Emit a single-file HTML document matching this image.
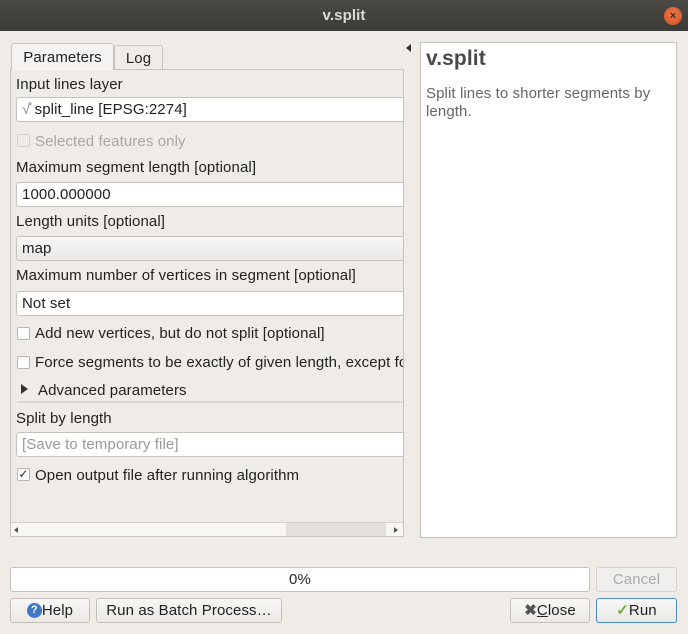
<!DOCTYPE html>
<html><head><style>
*{box-sizing:border-box;margin:0;padding:0}
body{width:688px;height:634px;background:#efebe7;font-family:"Liberation Sans",sans-serif;font-size:15px;letter-spacing:0.1px;color:#3c3c3c;position:relative;overflow:hidden}
.a{position:absolute}
.title{left:0;top:0;width:688px;height:31px;background:linear-gradient(#4a4945,#3c3b37);color:#dfdbd2;font-weight:bold;text-align:center;line-height:31px;font-size:15px}
.close{left:664px;top:7px;width:18px;height:18px;border-radius:50%;background:radial-gradient(circle at 50% 40%,#f07a4c,#d24e1f);color:#4a2a1a;font-size:11px;text-align:center;line-height:18px;font-weight:bold}
.field{background:#fff;border:1px solid #c6c2bd;border-radius:3px;height:25px;line-height:23px;padding-left:5px;color:#222;white-space:nowrap}
.lbl{color:#222;left:16px;white-space:nowrap}
.cb{width:13px;height:13px;border:1px solid #b8b4ae;background:#fff;border-radius:2px}
.btn{border:1px solid #c3bfba;border-radius:3px;background:linear-gradient(#f8f7f6,#ebe8e5);height:25px;line-height:23px;text-align:center;color:#222;white-space:nowrap}
</style></head><body>
<div class="a title">v.split</div>
<div class="a close">×</div>
<div class="a" style="left:11px;top:43px;width:103px;height:27px;border:1px solid #c6c2bd;border-bottom:none;border-radius:3px 3px 0 0;background:#f5f3f1;line-height:27px;text-align:center;color:#222;z-index:2">Parameters</div>
<div class="a" style="left:114px;top:45px;width:49px;height:24px;border:1px solid #c6c2bd;border-bottom:none;border-radius:3px 3px 0 0;line-height:25px;text-align:center;color:#222">Log</div>
<div class="a" style="left:10px;top:69px;width:394px;height:468px;border:1px solid #c6c2bd;background:#efebe7;overflow:hidden">
<div class="a lbl" style="top:6px;left:5px">Input lines layer</div>
<div class="a field" style="left:5px;top:27px;width:390px"><span style="color:#888">√̊</span> split_line [EPSG:2274]</div>
<div class="a cb" style="left:6px;top:64px;border-color:#d3cfca;background:#efebe7"></div>
<div class="a" style="left:24px;top:63px;color:#aaa6a1;white-space:nowrap">Selected features only</div>
<div class="a lbl" style="top:89px;left:5px">Maximum segment length [optional]</div>
<div class="a field" style="left:5px;top:112px;width:390px">1000.000000</div>
<div class="a lbl" style="top:143px;left:5px">Length units [optional]</div>
<div class="a field" style="left:5px;top:166px;width:390px;background:linear-gradient(#f7f6f5,#ebe9e6)">map</div>
<div class="a lbl" style="top:197px;left:5px">Maximum number of vertices in segment [optional]</div>
<div class="a field" style="left:5px;top:221px;width:390px">Not set</div>
<div class="a cb" style="left:6px;top:257px"></div>
<div class="a lbl" style="left:24px;top:255px">Add new vertices, but do not split [optional]</div>
<div class="a cb" style="left:6px;top:286px"></div>
<div class="a lbl" style="left:24px;top:284px">Force segments to be exactly of given length, except for last one</div>
<div class="a" style="left:10px;top:314px;width:0;height:0;border-left:7px solid #333;border-top:5px solid transparent;border-bottom:5px solid transparent"></div>
<div class="a lbl" style="left:27px;top:312px">Advanced parameters</div>
<div class="a" style="left:6px;top:331px;width:385px;height:2px;background:#dcd8d3"></div>
<div class="a lbl" style="top:340px;left:5px">Split by length</div>
<div class="a field" style="left:5px;top:362px;width:390px;color:#999">[Save to temporary file]</div>
<div class="a cb" style="left:6px;top:398px;line-height:11px;font-size:12px;text-align:center;color:#222">✓</div>
<div class="a lbl" style="left:24px;top:397px">Open output file after running algorithm</div>
<div class="a" style="left:0;top:452px;width:392px;height:15px;background:#f7f6f5;border-top:1px solid #d3cfca"></div>
<div class="a" style="left:275px;top:453px;width:100px;height:14px;background:#e3e0dc"></div>
<div class="a" style="left:3px;top:457px;border-right:4px solid #555;border-top:3px solid transparent;border-bottom:3px solid transparent"></div>
<div class="a" style="left:383px;top:457px;border-left:4px solid #555;border-top:3px solid transparent;border-bottom:3px solid transparent"></div>
</div>
<div class="a" style="left:406px;top:44px;border-right:5px solid #333;border-top:4px solid transparent;border-bottom:4px solid transparent"></div>
<div class="a" style="left:420px;top:42px;width:257px;height:496px;background:#fff;border:1px solid #c6c2bd"></div>
<div class="a" style="left:426px;top:47px;font-size:21px;font-weight:bold;color:#4a4a4a">v.split</div>
<div class="a" style="left:426px;top:85px;color:#666;width:248px;line-height:18px">Split lines to shorter segments by length.</div>
<div class="a" style="left:10px;top:567px;width:580px;height:25px;background:#fff;border:1px solid #c6c2bd;border-radius:3px;text-align:center;line-height:23px;color:#222">0%</div>
<div class="a btn" style="left:596px;top:567px;width:81px;color:#aaa;background:#f1efed;border-color:#d6d2cd">Cancel</div>
<div class="a btn" style="left:10px;top:598px;width:80px;display:flex;align-items:center;justify-content:center"><span style="display:inline-block;width:15px;height:15px;border-radius:50%;background:#3f78c8;color:#fff;font-size:11px;line-height:15px;font-weight:bold;text-align:center">?</span>Help</div>
<div class="a btn" style="left:96px;top:598px;width:186px">Run as Batch Process…</div>
<div class="a btn" style="left:510px;top:598px;width:80px"><span style="color:#555;font-weight:bold">✖</span><u>C</u>lose</div>
<div class="a btn" style="left:596px;top:598px;width:81px;border-color:#4a8ac8"><span style="color:#6cb030;font-weight:bold">✓</span>Run</div>
</body></html>
